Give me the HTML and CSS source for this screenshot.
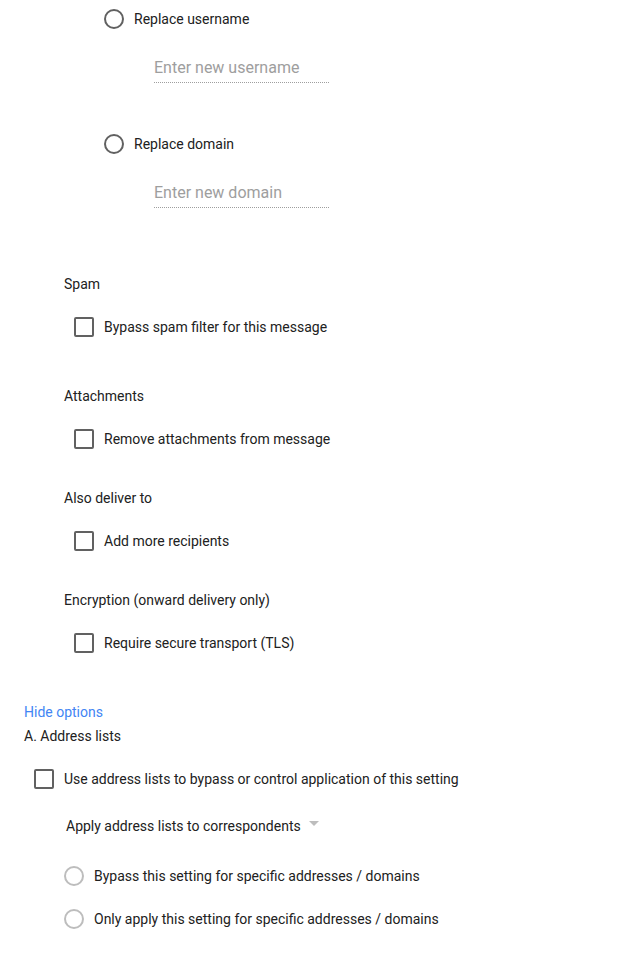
FILE: index.html
```html
<!DOCTYPE html>
<html>
<head>
<meta charset="utf-8">
<link rel="stylesheet" href="styles.css">
</head>
<body>
<div class="page">
  <div class="replace">
    <div class="row">
      <span class="radio dark"></span>
      <span class="text">Replace username</span>
    </div>
    <div class="field"><span class="placeholder">Enter new username</span></div>
    <div class="row row-gap-lg">
      <span class="radio dark"></span>
      <span class="text">Replace domain</span>
    </div>
    <div class="field"><span class="placeholder">Enter new domain</span></div>
  </div>

  <div class="group">
    <div class="label label-first">Spam</div>
    <div class="row check-row">
      <span class="checkbox"></span>
      <span class="text">Bypass spam filter for this message</span>
    </div>

    <div class="label label-lg">Attachments</div>
    <div class="row check-row">
      <span class="checkbox"></span>
      <span class="text">Remove attachments from message</span>
    </div>

    <div class="label">Also deliver to</div>
    <div class="row check-row">
      <span class="checkbox"></span>
      <span class="text">Add more recipients</span>
    </div>

    <div class="label">Encryption (onward delivery only)</div>
    <div class="row check-row">
      <span class="checkbox"></span>
      <span class="text">Require secure transport (TLS)</span>
    </div>
  </div>

  <div class="advanced">
    <a class="link" href="#">Hide options</a>
    <div class="section-title">A. Address lists</div>
    <div class="row check-row">
      <span class="checkbox"></span>
      <span class="text">Use address lists to bypass or control application of this setting</span>
    </div>
    <div class="sub">
      <div class="select">
        <span class="select-text">Apply address lists to correspondents</span>
        <span class="caret"></span>
      </div>
      <div class="row radio-row">
        <span class="radio light"></span>
        <span class="text">Bypass this setting for specific addresses / domains</span>
      </div>
      <div class="row radio-row2">
        <span class="radio light"></span>
        <span class="text">Only apply this setting for specific addresses / domains</span>
      </div>
    </div>
  </div>
</div>
</body>
</html>
```

FILE: styles.css
```css
* { box-sizing: border-box; }

html, body {
  margin: 0;
  padding: 0;
  background: #ffffff;
}

body {
  font-family: Roboto, "Liberation Sans", Arial, sans-serif;
  font-size: 14px;
  color: #212121;
  line-height: 20px;
}

.page {
  width: 627px;
}

.row {
  display: flex;
  align-items: center;
  height: 36px;
}

.text {
  white-space: nowrap;
}

.radio {
  flex: none;
  width: 20px;
  height: 20px;
  border-radius: 50%;
  border: 2px solid #616161;
  margin-right: 10px;
}

.radio.light {
  border-color: #bdbdbd;
}

.checkbox {
  flex: none;
  width: 20px;
  height: 20px;
  border: 2px solid #616161;
  border-radius: 2px;
  margin-right: 10px;
}

/* Replace section */
.replace {
  padding-left: 104px;
  padding-top: 1px;
}

.row-gap-lg {
  margin-top: 43px;
}

.field {
  margin-left: 50px;
  margin-top: 20px;
  width: 175px;
  line-height: 22px;
  padding-bottom: 3px;
  border-bottom: 1px dotted #9e9e9e;
  font-size: 16px;
}

.placeholder {
  color: #9e9e9e;
}

/* Groups */
.group {
  padding-left: 64px;
}

.label {
  margin-top: 31px;
  height: 20px;
}

.label-first {
  margin-top: 66px;
}

.label-lg {
  margin-top: 41px;
}

.check-row {
  margin-top: 15px;
  padding-left: 10px;
}

/* Advanced */
.advanced {
  padding-left: 24px;
  margin-top: 41px;
}

.link {
  display: block;
  color: #4285f4;
  text-decoration: none;
  height: 20px;
}

.section-title {
  margin-top: 4px;
  height: 20px;
}

.sub {
  padding-left: 40px;
}

.select {
  display: flex;
  align-items: center;
  margin-top: 19px;
  margin-left: 2px;
  height: 20px;
}

.caret {
  width: 0;
  height: 0;
  margin-left: 8px;
  margin-top: -6px;
  border-left: 5px solid transparent;
  border-right: 5px solid transparent;
  border-top: 5px solid #bdbdbd;
}

.radio-row {
  margin-top: 22px;
}

.radio-row2 {
  margin-top: 7px;
}
```
